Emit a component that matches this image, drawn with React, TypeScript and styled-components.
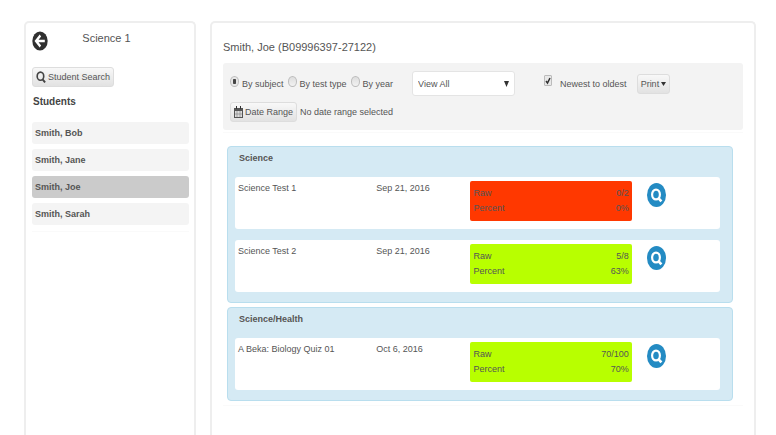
import React, { useState } from "react";
import styled, { createGlobalStyle, css } from "styled-components";

const GlobalStyle = createGlobalStyle`
  * { box-sizing: border-box; }
  body {
    margin: 0;
    background: #fff;
    color: #555;
    font: 9px/14px "Liberation Sans", Arial, sans-serif;
  }
  button, input, select { font: inherit; color: inherit; margin: 0; }
  h1, h2, h3, p, ul, dl, dd, fieldset { margin: 0; padding: 0; border: 0; }
  ul { list-style: none; }
`;

const Page = styled.div`
  display: grid;
  grid-template-columns: 172fr 546fr;
  gap: 14px;
  min-height: 100vh;
  padding: 21px 20px 0 24px;
`;

const cardStyle = css`
  border: 2px solid #eee;
  border-bottom: 0;
  border-radius: 5px 5px 0 0;
  background: #fff;
`;

const Sidebar = styled.aside`
  ${cardStyle}
  padding: 7px 5px 0 6px;
`;

const Main = styled.main`
  ${cardStyle}
  padding: 15px 11px 0;
`;

const SidebarHeader = styled.header`
  display: grid;
  grid-template-columns: 16px 1fr 24px;
  align-items: center;
  height: 22px;
`;

const IconButton = styled.button`
  display: flex;
  padding: 0;
  border: 0;
  background: none;
  cursor: pointer;
`;

const ClassTitle = styled.h1`
  font-size: 11px;
  line-height: 16px;
  font-weight: 400;
  text-align: center;
  margin-bottom: 6px;
`;

const Button = styled.button`
  display: inline-flex;
  align-items: center;
  gap: 2px;
  height: 20px;
  padding: 0 3px;
  border: 1px solid #ddd;
  border-radius: 3px;
  background: linear-gradient(#f8f8f8, #e2e2e2);
  white-space: nowrap;
  cursor: pointer;
`;

const SearchRow = styled.div`
  display: flex;
  margin-top: 15px;
`;

const ListTitle = styled.h2`
  margin: 7px 0 12px;
  padding-left: 1px;
  font-size: 10px;
  line-height: 16px;
  font-weight: 700;
  color: #444;
`;

const StudentList = styled.ul`
  display: grid;
  gap: 5px;
  padding-bottom: 6px;
  border-bottom: 1px solid #fafafa;
`;

const StudentButton = styled.button<{ $active: boolean }>`
  display: block;
  width: 100%;
  height: 22px;
  padding: 0 3px;
  border: 0;
  border-radius: 3px;
  background: ${(p) => (p.$active ? "#cbcbcb" : "#f4f4f4")};
  font-weight: 700;
  text-align: left;
  cursor: pointer;
`;

const StudentName = styled.h2`
  font-size: 11px;
  line-height: 18px;
  font-weight: 400;
`;

const Toolbar = styled.form`
  display: grid;
  gap: 6px;
  margin-top: 7px;
  padding: 8px 7px;
  border-radius: 3px;
  background: #f3f3f3;
`;

const ToolbarRow = styled.div<{ $gap?: number }>`
  display: flex;
  align-items: center;
  gap: ${(p) => p.$gap ?? 0}px;
`;

const RadioGroup = styled.fieldset`
  display: flex;
  gap: 4px;
  white-space: nowrap;
`;

const Choice = styled.label<{ $gap: number }>`
  display: flex;
  align-items: center;
  gap: ${(p) => p.$gap}px;
  white-space: nowrap;
`;

const Radio = styled.input`
  appearance: none;
  width: 9px;
  height: 11px;
  margin-bottom: 4px;
  border: 1px solid #bbb;
  border-radius: 50%;
  background: linear-gradient(#ddd, #f2f2f2);
  &:checked {
    background: radial-gradient(ellipse 2px 3px at center, #444 80%, #e6e6e6);
  }
`;

const Checkbox = styled.input`
  appearance: none;
  width: 8px;
  height: 11px;
  margin-bottom: 6px;
  border: 1px solid #bbb;
  border-radius: 1px;
  background: #e8e8e8;
  &:checked {
    background: #e8e8e8 url("data:image/svg+xml,%3Csvg xmlns='http://www.w3.org/2000/svg' viewBox='0 0 6 9' preserveAspectRatio='none'%3E%3Cpath d='M1 5l1.5 2L5 2' fill='none' stroke='%23333' stroke-width='1.5'/%3E%3C/svg%3E") center / 100% 100% no-repeat;
  }
`;

const SelectWrap = styled.div`
  display: grid;
  align-items: center;
  width: 103px;
  margin: 0 29px 0 19px;
  & > * { grid-area: 1 / 1; }
  & > svg { justify-self: end; margin-right: 6px; pointer-events: none; }
`;

const Select = styled.select`
  appearance: none;
  width: 100%;
  height: 25px;
  padding: 0 5px;
  border: 1px solid #e4e4e4;
  border-radius: 3px;
  background: #fff;
`;

const PrintWrap = styled.div`
  display: flex;
  margin-left: 10px;
`;

const Results = styled.div`
  display: grid;
  gap: 4px;
  margin-top: 2px;
  padding: 13px 10px 4px 4px;
  border: solid #fafafa;
  border-width: 1px 0;
`;

const Group = styled.section`
  display: grid;
  gap: 11px;
  padding: 4px 12px 10px 7px;
  border: 1px solid #b9deee;
  border-radius: 4px;
  background: #d5eaf4;
`;

const GroupTitle = styled.h3`
  padding: 0 4px;
  margin-bottom: 1px;
  font-size: 9px;
  line-height: 14px;
  font-weight: 700;
`;

const Result = styled.article`
  display: grid;
  grid-template-columns: 138fr 94fr 161fr 85fr;
  min-height: 52px;
  padding: 4px 3px;
  border-radius: 3px;
  background: #fff;
`;

const Score = styled.dl<{ $color: string }>`
  height: 40px;
  padding: 5px 3px;
  border-radius: 2px;
  background: ${(p) => p.$color};
  line-height: 15px;
`;

const ScoreLine = styled.div`
  display: flex;
  justify-content: space-between;
`;

const Detail = styled.div`
  padding: 2px 0 0 15px;
`;

function BackIcon() {
  return (
    <svg width="16" height="20" viewBox="0 0 20 20" preserveAspectRatio="none" aria-hidden="true">
      <circle cx="10" cy="10" r="9.6" fill="#303030" />
      <path d="M16 10H5M10.5 4.500L5 10l5.500 5.500" fill="none" stroke="#fff" strokeWidth="2.600" />
    </svg>
  );
}

function SearchIcon() {
  return (
    <svg width="10" height="12" viewBox="0 0 18 22" aria-hidden="true">
      <ellipse cx="8" cy="9.500" rx="6" ry="7.500" fill="none" stroke="#444" strokeWidth="3" />
      <path d="M11.500 15l5 6" stroke="#444" strokeWidth="3.500" />
    </svg>
  );
}

function ViewIcon() {
  return (
    <svg width="19" height="24" viewBox="0 0 19 24" aria-hidden="true">
      <ellipse cx="9.500" cy="12" rx="9.500" ry="12" fill="#248bc3" />
      <ellipse cx="9" cy="11.500" rx="3.900" ry="4.900" fill="none" stroke="#fff" strokeWidth="2.200" />
      <path d="M11.200 14.800l3.200 3.600" stroke="#fff" strokeWidth="2.600" />
    </svg>
  );
}

function CalendarIcon() {
  return (
    <svg width="9" height="12" viewBox="0 0 9 12" aria-hidden="true">
      <path d="M0 2h9v10H0z" fill="#555" />
      <path d="M2 0h1v3H2zM6 0h1v3H6z" fill="#333" />
      <path d="M1 5h7v6H1z" fill="#ddd" />
      <path d="M3 5v6M6 5v6M1 8h7" stroke="#888" strokeWidth="0.700" />
    </svg>
  );
}

function Caret({ tall = false }: { tall?: boolean }) {
  return (
    <svg width="5" height={tall ? 6 : 4} viewBox="0 0 5 4" preserveAspectRatio="none" aria-hidden="true">
      <path d="M0 0h5L2.500 4z" fill="#333" />
    </svg>
  );
}

const RED = "#ff3800";
const GREEN = "#b8ff00";
const students = ["Smith, Bob", "Smith, Jane", "Smith, Joe", "Smith, Sarah"];
const sorts = ["By subject", "By test type", "By year"];
const groups = [
  {
    name: "Science",
    tests: [
      { name: "Science Test 1", date: "Sep 21, 2016", raw: "0/2", percent: "0%", color: RED },
      { name: "Science Test 2", date: "Sep 21, 2016", raw: "5/8", percent: "63%", color: GREEN },
    ],
  },
  {
    name: "Science/Health",
    tests: [{ name: "A Beka: Biology Quiz 01", date: "Oct 6, 2016", raw: "70/100", percent: "70%", color: GREEN }],
  },
];

export default function App() {
  const [student, setStudent] = useState("Smith, Joe");

  return (
    <>
      <GlobalStyle />
      <Page>
        <Sidebar>
          <SidebarHeader>
            <IconButton aria-label="Back"><BackIcon /></IconButton>
            <ClassTitle>Science 1</ClassTitle>
          </SidebarHeader>
          <SearchRow>
            <Button type="button"><SearchIcon />Student Search</Button>
          </SearchRow>
          <ListTitle>Students</ListTitle>
          <StudentList>
            {students.map((name) => (
              <li key={name}>
                <StudentButton $active={name === student} onClick={() => setStudent(name)}>{name}</StudentButton>
              </li>
            ))}
          </StudentList>
        </Sidebar>
        <Main>
          <StudentName>Smith, Joe (B09996397-27122)</StudentName>
          <Toolbar>
            <ToolbarRow>
              <RadioGroup aria-label="Sort results">
                {sorts.map((label, i) => (
                  <Choice key={label} $gap={3}>
                    <Radio type="radio" name="sort" defaultChecked={i === 0} />
                    {label}
                  </Choice>
                ))}
              </RadioGroup>
              <SelectWrap>
                <Select aria-label="View"><option>View All</option></Select>
                <Caret tall />
              </SelectWrap>
              <Choice $gap={8}>
                <Checkbox type="checkbox" defaultChecked />
                Newest to oldest
              </Choice>
              <PrintWrap>
                <Button type="button">Print<Caret /></Button>
              </PrintWrap>
            </ToolbarRow>
            <ToolbarRow $gap={3}>
              <Button type="button"><CalendarIcon />Date Range</Button>
              <p>No date range selected</p>
            </ToolbarRow>
          </Toolbar>
          <Results>
            {groups.map((group) => (
              <Group key={group.name}>
                <GroupTitle>{group.name}</GroupTitle>
                {group.tests.map((test) => (
                  <Result key={test.name}>
                    <p>{test.name}</p>
                    <p>{test.date}</p>
                    <Score $color={test.color}>
                      <ScoreLine><dt>Raw</dt><dd>{test.raw}</dd></ScoreLine>
                      <ScoreLine><dt>Percent</dt><dd>{test.percent}</dd></ScoreLine>
                    </Score>
                    <Detail>
                      <IconButton aria-label={`View ${test.name}`}><ViewIcon /></IconButton>
                    </Detail>
                  </Result>
                ))}
              </Group>
            ))}
          </Results>
        </Main>
      </Page>
    </>
  );
}
